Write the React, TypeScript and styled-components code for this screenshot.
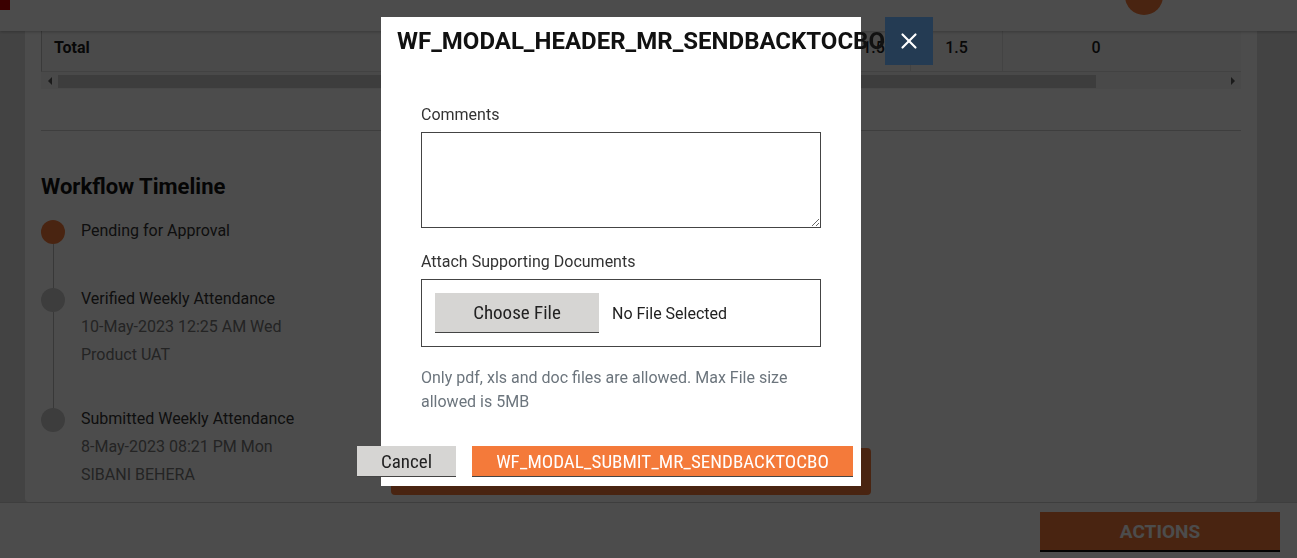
import React from "react";
import styled, { createGlobalStyle } from "styled-components";
import { X } from "lucide-react";

const GlobalStyle = createGlobalStyle`
  html, body { margin: 0; padding: 0; }
  body {
    font-family: Roboto, "Liberation Sans", sans-serif;
    color: #333;
    background: #e2e2e2;
  }
  * { box-sizing: border-box; }
`;

const condensed = `"Roboto Condensed", "Liberation Sans Narrow", "Arial Narrow", Roboto, sans-serif`;

const Page = styled.div`
  position: relative;
  height: 558px;
  display: flex;
  flex-direction: column;
  overflow: hidden;
  background: #e2e2e2;
`;

const Header = styled.header`
  position: relative;
  z-index: 2;
  height: 31px;
  flex: none;
  display: flex;
  align-items: flex-start;
  background: #fff;
  box-shadow: 0 1px 3px rgba(0, 0, 0, 0.25);
`;

const LogoMark = styled.div`
  width: 10px;
  height: 10px;
  background: #c20000;
`;

const Avatar = styled.div`
  width: 38px;
  height: 38px;
  margin: -23px 134px 0 auto;
  border-radius: 50%;
  background: #f47a3a;
`;

const Main = styled.main`
  position: relative;
  z-index: 1;
  flex: 1;
  min-height: 0;
  display: flex;
  margin-top: -8px;
  padding: 0 40px 0 25px;
`;

const Card = styled.section`
  flex: 1;
  display: flex;
  flex-direction: column;
  background: #fff;
  border-radius: 0 0 4px 4px;
  padding: 0 16px 7px;
  overflow: hidden;
`;

const TotalsRow = styled.div`
  height: 49px;
  flex: none;
  display: grid;
  grid-template-columns: 1fr 74px 92px 186px 52px;
  border-left: 1px solid #c4c4c4;
  border-bottom: 1px solid #dcdcdc;
  background: #f9f9f9;
`;

const Cell = styled.div<{ $align?: "left" | "center"; $bold?: boolean; $divider?: boolean }>`
  display: flex;
  align-items: center;
  justify-content: ${(p) => (p.$align === "center" ? "center" : "flex-start")};
  padding: 0 12px;
  font-size: 16px;
  font-weight: ${(p) => (p.$bold ? 700 : 500)};
  color: #1c1c1c;
  border-right: ${(p) => (p.$divider ? "1px solid #e0e0e0" : "none")};
`;

const ScrollTrack = styled.div`
  height: 17px;
  flex: none;
  display: flex;
  align-items: stretch;
  background: #f3f3f3;
`;

const ScrollArrow = styled.div<{ $dir: "left" | "right" }>`
  width: 17px;
  flex: none;
  display: flex;
  align-items: center;
  justify-content: center;
  &::before {
    content: "";
    width: 0;
    height: 0;
    border-top: 4px solid transparent;
    border-bottom: 4px solid transparent;
    ${(p) =>
      p.$dir === "left"
        ? "border-right: 4px solid #5a5a5a;"
        : "border-left: 4px solid #5a5a5a;"}
  }
`;

const ScrollThumbArea = styled.div`
  flex: 1;
  padding: 3px 0 1px;
`;

const ScrollThumb = styled.div`
  height: 100%;
  background: #cdcdcd;
`;

const Divider = styled.hr`
  flex: none;
  width: 100%;
  margin: 41px 0 0;
  border: none;
  border-top: 1px solid #d0d0d0;
`;

const SectionTitle = styled.h2`
  margin: 42px 0 16px;
  font-size: 22px;
  line-height: 28px;
  font-weight: 700;
  color: #111;
`;

const TimelineSection = styled.div`
  flex: 1;
  display: flex;
  align-items: flex-start;
  min-height: 0;
`;

const Timeline = styled.ol`
  list-style: none;
  margin: 0;
  padding: 0;
  width: 350px;
  flex: none;
`;

const Item = styled.li`
  display: flex;
  gap: 16px;
`;

const Marker = styled.div`
  width: 24px;
  flex: none;
  display: flex;
  flex-direction: column;
  align-items: center;
  padding-top: 3px;
`;

const Dot = styled.span<{ $active?: boolean }>`
  width: 24px;
  height: 24px;
  border-radius: 50%;
  flex: none;
  background: ${(p) => (p.$active ? "#f47a3a" : "#cccccc")};
`;

const Connector = styled.span`
  flex: 1;
  width: 1px;
  margin-bottom: -3px;
  background: #bdbdbd;
`;

const ItemBody = styled.div<{ $last?: boolean }>`
  min-height: 32px;
  box-sizing: content-box;
  padding-bottom: ${(p) => (p.$last ? "0" : "36px")};
  font-size: 16px;
  line-height: 28px;
`;

const ItemTitle = styled.div`
  color: #333;
`;

const ItemMeta = styled.div`
  color: #787878;
`;

const GhostAction = styled.div`
  align-self: flex-end;
  width: 480px;
  height: 47px;
  border-radius: 4px;
  background: #f47a3a;
`;

const Footer = styled.footer`
  height: 56px;
  flex: none;
  display: flex;
  justify-content: flex-end;
  align-items: flex-start;
  padding: 9px 17px 0 0;
  background: #fff;
  border-top: 1px solid #d0d0d0;
`;

const ActionsButton = styled.button`
  width: 240px;
  height: 40px;
  border: none;
  border-bottom: 2px solid #000;
  background: #f47a3a;
  color: #ffffff;
  font-family: Roboto, sans-serif;
  font-size: 19px;
  font-weight: 700;
  padding: 0;
`;

const Backdrop = styled.div`
  position: fixed;
  inset: 0;
  z-index: 10;
  background: rgba(0, 0, 0, 0.7);
  padding: 17px 0 0 381px;
`;

const Dialog = styled.div`
  position: relative;
  width: 480px;
  background: #fff;
  padding: 10px 8px 9px 16px;
`;

const DialogTitle = styled.h1`
  margin: 0;
  font-size: 24px;
  line-height: 28px;
  font-weight: 700;
  color: #111;
  white-space: nowrap;
`;

const CloseButton = styled.button`
  position: absolute;
  top: 0;
  left: calc(100% + 24px);
  width: 48px;
  height: 48px;
  display: flex;
  align-items: center;
  justify-content: center;
  border: none;
  padding: 0;
  background: #243b53;
  color: #fff;
`;

const DialogBody = styled.div`
  padding: 48px 32px 0 24px;
`;

const FieldLabel = styled.label`
  display: block;
  font-size: 16px;
  line-height: 24px;
  color: #333;
  margin-bottom: 5px;
`;

const CommentBox = styled.textarea`
  display: block;
  width: 400px;
  height: 96px;
  margin: 0 0 22px;
  border: 1px solid #444;
  border-radius: 0;
  font-family: Roboto, sans-serif;
  font-size: 16px;
  resize: vertical;
`;

const FileBox = styled.div`
  width: 400px;
  height: 68px;
  display: flex;
  align-items: center;
  gap: 13px;
  padding: 0 13px;
  border: 1px solid #444;
`;

const GreyButton = styled.button<{ $width: number }>`
  width: ${(p) => p.$width}px;
  flex: none;
  border: none;
  border-bottom: 1px solid #444;
  background: #d6d5d3;
  color: #222;
  font-family: ${condensed};
  font-size: 19px;
  padding: 0;
`;

const ChooseButton = styled(GreyButton)`
  height: 40px;
`;

const FileName = styled.span`
  font-size: 16px;
  color: #222;
`;

const Hint = styled.p`
  margin: 19px 0 0;
  font-size: 16px;
  line-height: 24px;
  color: #6c757d;
`;

const DialogActions = styled.div`
  display: flex;
  justify-content: flex-end;
  gap: 16px;
  margin-top: 32px;
`;

const CancelButton = styled(GreyButton)`
  height: 31px;
`;

const SubmitButton = styled.button`
  width: 381px;
  height: 31px;
  flex: none;
  border: none;
  border-bottom: 1px solid #444;
  background: #f47a3a;
  color: #fff;
  font-family: ${condensed};
  font-size: 19px;
  padding: 0;
`;

type Step = { title: string; meta: string[]; active?: boolean };

const steps: Step[] = [
  { title: "Pending for Approval", meta: [], active: true },
  {
    title: "Verified Weekly Attendance",
    meta: ["10-May-2023 12:25 AM Wed", "Product UAT"],
  },
  {
    title: "Submitted Weekly Attendance",
    meta: ["8-May-2023 08:21 PM Mon", "SIBANI BEHERA"],
  },
];

export default function App() {
  return (
    <>
      <GlobalStyle />
      <Page>
        <Header>
          <LogoMark />
          <Avatar />
        </Header>
        <Main>
          <Card>
            <TotalsRow>
              <Cell $bold>Total</Cell>
              <Cell $align="center" $divider>1.5</Cell>
              <Cell $align="center" $divider>1.5</Cell>
              <Cell $align="center">0</Cell>
              <Cell />
            </TotalsRow>
            <ScrollTrack>
              <ScrollArrow $dir="left" />
              <ScrollThumbArea>
                <ScrollThumb style={{ width: "89%" }} />
              </ScrollThumbArea>
              <ScrollArrow $dir="right" />
            </ScrollTrack>
            <Divider />
            <SectionTitle>Workflow Timeline</SectionTitle>
            <TimelineSection>
              <Timeline>
                {steps.map((s, i) => {
                  const last = i === steps.length - 1;
                  return (
                    <Item key={s.title}>
                      <Marker>
                        <Dot $active={s.active} />
                        {!last && <Connector />}
                      </Marker>
                      <ItemBody $last={last}>
                        <ItemTitle>{s.title}</ItemTitle>
                        {s.meta.map((m) => (
                          <ItemMeta key={m}>{m}</ItemMeta>
                        ))}
                      </ItemBody>
                    </Item>
                  );
                })}
              </Timeline>
              <GhostAction />
            </TimelineSection>
          </Card>
        </Main>
        <Footer>
          <ActionsButton>ACTIONS</ActionsButton>
        </Footer>
        <Backdrop>
          <Dialog>
            <DialogTitle>WF_MODAL_HEADER_MR_SENDBACKTOCBO</DialogTitle>
            <CloseButton aria-label="Close">
              <X size={26} strokeWidth={2} />
            </CloseButton>
            <DialogBody>
              <FieldLabel>Comments</FieldLabel>
              <CommentBox />
              <FieldLabel>Attach Supporting Documents</FieldLabel>
              <FileBox>
                <ChooseButton $width={164}>Choose File</ChooseButton>
                <FileName>No File Selected</FileName>
              </FileBox>
              <Hint>
                Only pdf, xls and doc files are allowed. Max File size allowed is 5MB
              </Hint>
            </DialogBody>
            <DialogActions>
              <CancelButton $width={99}>Cancel</CancelButton>
              <SubmitButton>WF_MODAL_SUBMIT_MR_SENDBACKTOCBO</SubmitButton>
            </DialogActions>
          </Dialog>
        </Backdrop>
      </Page>
    </>
  );
}
